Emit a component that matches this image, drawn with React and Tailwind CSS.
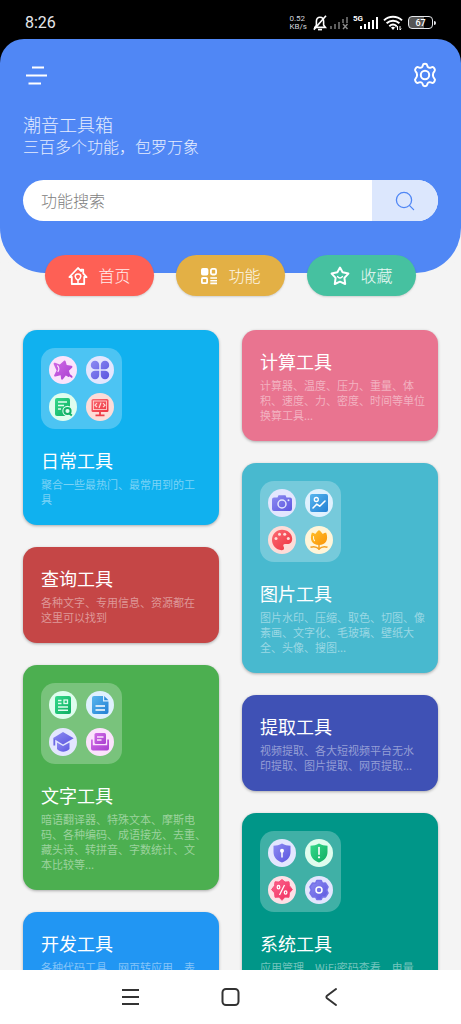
import { useState } from "react";

/* -------------------------------------------------------
    Status bar
--------------------------------------------------------*/
const BellOffIcon = () => (
  <svg width="14" height="16" viewBox="0 0 14 16" fill="none" stroke="#fff" strokeWidth="1.6">
    <path d="M2.600 11.600 3.400 10V6.200C3.400 3.800 4.900 2.200 7 2.200s3.600 1.600 3.600 4V10l1.800 2.400H1" />
    <path d="M13 .8.8 14.600" strokeWidth="1.600" />
    <path d="M5 14.600h4" strokeWidth="1.600" />
  </svg>
);

const NoSignalIcon = () => (
  <svg width="19" height="14" viewBox="0 0 19 14" fill="#5c5c5c">
    <rect x="0" y="10" width="2" height="3" />
    <rect x="4" y="8" width="2" height="5" />
    <rect x="8" y="6" width="2" height="7" />
    <rect x="12" y="3" width="2" height="4" />
    <rect x="16" y="1" width="2" height="6" />
    <path d="m13 8 4.500 5M17.500 8 13 13" stroke="#8a8a8a" strokeWidth="1.400" />
  </svg>
);

const SignalIcon = () => (
  <svg width="18" height="14" viewBox="0 0 18 14" fill="#fff">
    <rect x="0" y="10" width="2" height="3" />
    <rect x="4" y="8" width="2" height="5" />
    <rect x="8" y="6" width="2" height="7" />
    <rect x="12" y="4" width="2" height="9" />
    <rect x="16" y="1" width="2" height="12" />
  </svg>
);

const WifiIcon = () => (
  <svg width="20" height="16" viewBox="0 0 20 16" fill="none" stroke="#fff" strokeWidth="2">
    <path d="M1 5.400c5-4.800 13-4.800 18 0" />
    <path d="M3.600 8.300c3.700-3.300 9.100-3.300 12.800 0" />
    <path d="M6.300 11.200c2.200-2 5.200-2 7.400 0" />
    <path d="m10 15-2-2.400c1-1 3-1 4 0Z" fill="#fff" stroke="none" />
    <path d="M14.500 15v-4M17 11v4m-3.800-2.600 1.300-1.400m3.800 2.600L17 15" strokeWidth="1" />
  </svg>
);

const StatusBar = () => (
  <div className="flex h-[39px] shrink-0 items-center justify-between bg-black px-[25px] pt-[6px] text-white">
    <span className="font-[Roboto] text-[16px] leading-[20px] text-gray-200">8:26</span>
    <div className="flex items-center">
      <span className="font-[Roboto] text-[8px] leading-[8px] text-gray-300">
        0.52
        <br />
        KB/s
      </span>
      <div className="ml-[6px] flex items-center">
        <BellOffIcon />
      </div>
      <div className="ml-[3px]">
        <NoSignalIcon />
      </div>
      <span className="ml-[4px] self-start font-[Roboto] text-[8px] leading-[8px] font-bold">5G</span>
      <div className="-ml-[3px]">
        <SignalIcon />
      </div>
      <div className="ml-[5px]">
        <WifiIcon />
      </div>
      <div className="ml-[5px] flex items-center gap-px">
        <span className="flex h-[13px] w-[25px] items-center justify-center rounded-[4px] border border-gray-200 bg-linear-to-r from-[#555] from-65% to-black to-65% font-[Roboto] text-[9px] leading-[10px] font-medium">
          67
        </span>
        <span className="h-[4px] w-[2px] rounded-r bg-gray-200" />
      </div>
    </div>
  </div>
);

/* -------------------------------------------------------
    Line icons
--------------------------------------------------------*/
const MenuIcon = () => (
  <svg width="26" height="26" viewBox="0 0 26 26" stroke="#fff" strokeWidth="2.200">
    <path d="M9 5.500h12M3 13.500h21M5.500 21.500h12.500" />
  </svg>
);

const GearIcon = () => (
  <svg width="26" height="26" viewBox="0 0 26 26" fill="none" stroke="#fff" strokeWidth="2" strokeLinejoin="round">
    <path d="M10.800 3.400c.3-2.100 4.100-2.100 4.400 0 .3 2 1.700 2.900 3.600 2.200l1.200-.5c1.700-.6 3.900 2.900 2.500 4.200-2.100 1.900-2.100 5.500 0 7.400 1.400 1.300-.8 4.800-2.500 4.200l-1.200-.5c-1.900-.7-3.300.2-3.600 2.200-.3 2.100-4.100 2.100-4.400 0-.3-2-1.700-2.900-3.600-2.200l-1.200.5c-1.700.6-3.900-2.900-2.500-4.200 2.100-1.900 2.100-5.500 0-7.400-1.400-1.300.8-4.800 2.500-4.200l1.200.5c1.900.7 3.300-.2 3.600-2.200z" />
    <circle cx="13" cy="13" r="4.200" />
  </svg>
);

const SearchIcon = () => (
  <svg width="20" height="20" viewBox="0 0 20 20" fill="none" stroke="#5087f5" strokeWidth="1.300" strokeLinecap="round">
    <circle cx="9" cy="9" r="7.600" />
    <path d="m14.600 14.600 4 4" />
  </svg>
);

const HomeIcon = () => (
  <svg width="20" height="20" viewBox="0 0 20 20" fill="none" stroke="#fff" strokeWidth="1.800" strokeLinejoin="round" strokeLinecap="round">
    <path d="M3.800 11H1.400L10 2l3.200 3.200V3.600h2v3.700L18.600 11h-2.400v7H3.800z" />
    <path d="M10 14.300c-1.800-1.400-2.800-2.500-2.800-3.800 0-1.500 1.200-2.500 2.800-2.500s2.800 1 2.800 2.500c0 1.300-1 2.400-2.800 3.800v3" strokeWidth="1.500" />
  </svg>
);

const GridIcon = () => (
  <svg width="18" height="18" viewBox="0 0 18 18" fill="none" stroke="#fff" strokeWidth="1.800">
    <rect x="1.900" y="1.900" width="5.600" height="5.600" rx="1" fill="#fff" />
    <rect x="10.900" y="1.900" width="5.200" height="5.600" rx="1.500" />
    <rect x="1.900" y="11" width="5.200" height="5.200" rx="1" />
    <path d="M10.300 11h6.700M10.300 13.700h6.700M10.300 16.400h6.700" strokeWidth="1.600" />
  </svg>
);

const StarIcon = () => (
  <svg width="20" height="20" viewBox="0 0 20 20" fill="none" stroke="#fff" strokeWidth="2" strokeLinejoin="round" strokeLinecap="round">
    <path d="m10 1.600 2.600 4.700 5.800 1.300-4 4.300.8 6.100-5.200-2.300L4.800 18l.8-6.100-4-4.300 5.800-1.300z" />
    <path d="M7.600 10.600c1.400 1.900 3.400 1.900 4.800 0" strokeWidth="1.500" />
  </svg>
);

/* -------------------------------------------------------
    Round tool icons, gradients are shared by id
--------------------------------------------------------*/
const gradients = [
  ["purple", "#d06ae6", "#a93fd0"],
  ["indigo", "#8d8bf2", "#5c56df"],
  ["green", "#35d98b", "#0fae62"],
  ["red", "#fb6a72", "#ee3340"],
  ["blue", "#58b6ee", "#2380d4"],
  ["orange", "#ffc02c", "#fb9407"],
  ["rose", "#fb6890", "#f12a5c"],
];

const Gradients = () => (
  <svg width="0" height="0" className="absolute" aria-hidden="true">
    <defs>
      {gradients.map(([id, from, to]) => (
        <linearGradient key={id} id={id} x1="0" y1="0" x2="1" y2="1">
          <stop offset="0" stopColor={from} />
          <stop offset="1" stopColor={to} />
        </linearGradient>
      ))}
    </defs>
  </svg>
);

const Round = ({ bg, children }) => (
  <svg width="28" height="28" viewBox="0 0 28 28" aria-hidden="true">
    <circle cx="14" cy="14" r="14" fill={bg} />
    {children}
  </svg>
);

const MagicStar = () => (
  <Round bg="#fbe3fc">
    <path
      d="M15 4.800c.7-.5 1.500-.1 1.700.7l1 3.600 4.700.6c1.100.1 1.400 1.300.6 2l-3.100 3 1.100 3.500c1 .6 2.100 1.400 2.500 2.400.4 1.200-.8 1.500-1.500.8l-1.400-1.200c0 .7-.8 1-1.500.6l-2.300-1.200-2.900 3.600c-.6.8-1.700.5-1.800-.4l-.5-3.600-5.200 1.300c-1 .2-1.600-.6-1.100-1.500l2.300-4.500-2.900-6.300c-.4-1 .4-1.800 1.400-1.400l4.700 1.800z"
      fill="url(#purple)"
    />
    <path d="M8.300 9.500c2 1.800 2 4.700.4 6.400" fill="none" stroke="#fbe3fc" strokeWidth="1.200" />
  </Round>
);

const Clover = () => (
  <Round bg="#e3e6fe">
    <path
      d="M13.200 13.200H9.300a4.200 4.200 0 1 1 3.900-4zM14.800 13.200v-4a4.200 4.200 0 1 1 3.900 4zM13.200 14.800v4a4.200 4.200 0 1 1-3.900-4zM14.800 14.800h3.900a4.200 4.200 0 1 1-3.900 4z"
      fill="url(#indigo)"
    />
  </Round>
);

const DocSearch = () => (
  <Round bg="#dffdee">
    <rect x="6" y="5" width="15" height="18" rx="2" fill="url(#green)" />
    <path d="M9 9h9M9 12.500h6M9 16h3" stroke="#dffdee" strokeWidth="1.500" />
    <circle cx="18.500" cy="18" r="5.200" fill="#dffdee" />
    <circle cx="18.500" cy="18" r="3.100" fill="none" stroke="#13b268" strokeWidth="2" />
    <path d="m20.500 20.500 2.300 2" stroke="#13b268" strokeWidth="2" />
  </Round>
);

const CodeScreen = () => (
  <Round bg="#fddcd8">
    <rect x="5.500" y="6" width="17" height="13" rx="1.500" fill="url(#red)" />
    <rect x="7.500" y="8" width="13" height="8.600" fill="none" stroke="#fddcd8" strokeWidth=".8" />
    <path d="m11 10.200-2 2 2 2M17 10.200l2 2-2 2M15 9.600l-2 5.400" fill="none" stroke="#fddcd8" strokeWidth="1.200" />
    <path d="M14 19v3M9.500 22.300h9" stroke="#ee3f49" strokeWidth="1.800" />
  </Round>
);

const Camera = () => (
  <Round bg="#e3e6fe">
    <path d="M6 8.500h3.500l1-2.300h7l1 2.300H22a2 2 0 0 1 2 2V20a2 2 0 0 1-2 2H6a2 2 0 0 1-2-2v-9.500a2 2 0 0 1 2-2z" fill="url(#indigo)" />
    <circle cx="14" cy="15" r="4" fill="none" stroke="#e3e6fe" strokeWidth="1.500" />
    <circle cx="20.500" cy="11.300" r="1" fill="#e3e6fe" />
  </Round>
);

const Picture = () => (
  <Round bg="#dff1fe">
    <rect x="5" y="5" width="18" height="18" rx="2" fill="url(#blue)" />
    <circle cx="11.300" cy="10.500" r="2" fill="none" stroke="#fff" strokeWidth="1.300" />
    <path d="m8 19 3.700-3.800 3 2L20 12" fill="none" stroke="#fff" strokeWidth="1.600" strokeLinecap="round" strokeLinejoin="round" />
  </Round>
);

const Palette = () => (
  <Round bg="#fddcd8">
    <path d="M14 3.800c5.800 0 10.200 4 10.200 9 0 3.600-2 5.200-4.800 5.200-1.800 0-3.400-.4-4 .8-.7 1.300 1 2.300.6 4-.3 1.200-1.300 1.500-2.500 1.400C8.200 23.800 4 19.400 4 14S8.200 3.800 14 3.800z" fill="url(#red)" />
    <g fill="#fddcd8">
      <circle cx="8" cy="12.500" r="1.500" />
      <circle cx="11.500" cy="8.300" r="1.500" />
      <circle cx="16.700" cy="8.300" r="1.500" />
      <circle cx="20.300" cy="12.500" r="1.500" />
    </g>
  </Round>
);

const Tulip = () => (
  <Round bg="#fff5d9">
    <path
      d="M6.800 6.800c1.400 0 2.500.5 3.400 1.300L13 4.700c.6-.7 1.400-.7 2 0l2.800 3.400c.9-.8 2-1.300 3.400-1.300 2.600 7-.4 12.200-7.200 12.200S4.200 13.800 6.800 6.800z"
      fill="url(#orange)"
    />
    <path d="M14 18v6M5.500 21.300c3.300-1.200 6.200-.6 8.500 1.700 2.300-2.300 5.200-2.900 8.500-1.700" fill="none" stroke="#f5a020" strokeWidth="1.500" />
    <path d="M8.500 10.500c-.2 1.700.1 3 1 4.200" fill="none" stroke="#fff5d9" strokeWidth="1.100" strokeLinecap="round" />
  </Round>
);

const Newspaper = () => (
  <Round bg="#dffdee">
    <rect x="6" y="5" width="16" height="18" rx="2" fill="url(#green)" />
    <path d="M9 9.500h3.500M9 12.500h3.500M9 16h10M9 19.300h10" stroke="#dffdee" strokeWidth="1.400" />
    <rect x="15" y="9" width="3.500" height="3.500" fill="none" stroke="#dffdee" strokeWidth="1.300" />
  </Round>
);

const FileText = () => (
  <Round bg="#dff1fe">
    <path d="M8 5h9v5.500h5.500V21a2 2 0 0 1-2 2H8a2 2 0 0 1-2-2V7a2 2 0 0 1 2-2z" fill="url(#blue)" />
    <path d="m18.200 5 4.300 4.300h-4.300z" fill="#2f8ddb" />
    <path d="M9.500 15h9.500M9.500 19h9.500" stroke="#fff" strokeWidth="1.300" />
  </Round>
);

const GradCap = () => (
  <Round bg="#e3e6fe">
    <path d="m14 4 10.700 6.300L14 16.400 3.800 10.300z" fill="url(#indigo)" />
    <path d="M8 14.600 14 18l6.500-3.600v6.700c-3.800 3.500-9 3.500-12.500 0z" fill="url(#indigo)" />
    <path d="M5.300 11v6.500" stroke="#6c68e4" strokeWidth="1.800" />
  </Round>
);

const Inbox = () => (
  <Round bg="#fbe3fc">
    <rect x="8.500" y="5" width="11.500" height="11" rx="1.500" fill="url(#purple)" />
    <path d="M11 9h6.500M11 12h4.500" stroke="#fbe3fc" strokeWidth="1.300" />
    <path d="M5 11.500h1.800v5.800h14.400v-5.800H23v9a2 2 0 0 1-2 2H7a2 2 0 0 1-2-2z" fill="url(#purple)" />
  </Round>
);

const shieldPath = "M14 4.500c2.700 1.500 5.500 2.200 8.500 2.200V13c0 5-3.200 8.500-8.500 10.600C8.700 21.500 5.500 18 5.500 13V6.700c3 0 5.800-.7 8.500-2.200z";

const ShieldLock = () => (
  <Round bg="#e3e6fe">
    <path d={shieldPath} fill="url(#indigo)" />
    <circle cx="14" cy="11.700" r="2" fill="#fff" />
    <path d="M14 12v6.500" stroke="#fff" strokeWidth="1.500" />
  </Round>
);

const ShieldAlert = () => (
  <Round bg="#dffdee">
    <path d={shieldPath} fill="url(#green)" />
    <path d="M14 8.500v6.800" stroke="#fff" strokeWidth="1.600" strokeLinecap="round" />
    <circle cx="14" cy="18.300" r="1.100" fill="#fff" />
  </Round>
);

const Discount = () => (
  <Round bg="#fde0e6">
    <path
      d="m14 3.500 3 2.600 4-.3.400 3.900 3 3.900-3 3.300-.4 4.400-4-.2-3 3.200-3-3.200-4 .2-.4-4.400-3-3.300 3-3.900.4-3.900 4 .3z"
      fill="url(#rose)"
      stroke="#f64a75"
      strokeLinejoin="round"
    />
    <g fill="none" stroke="#fff" strokeWidth="1.300">
      <path d="m16.500 9-5 10" />
      <ellipse cx="10.500" cy="11.200" rx="1.300" ry="1.700" />
      <ellipse cx="17.600" cy="16.500" rx="1.300" ry="1.700" />
    </g>
  </Round>
);

const Cog = () => (
  <Round bg="#e3e6fe">
    <path
      d="M11.800 4.500h4.400l1.200 2.700 3.100-.1 2.500 3.900-1.300 3 1.300 3-2.500 3.900-3.100-.1-1.200 2.700h-4.400l-1.200-2.700-3.100.1L5 17l1.300-3L5 11l2.500-3.900 3.100.1z"
      fill="url(#indigo)"
      stroke="#7672e8"
      strokeWidth="1.600"
      strokeLinejoin="round"
    />
    <circle cx="14" cy="14" r="3" fill="none" stroke="#fff" strokeWidth="1.500" />
  </Round>
);

/* -------------------------------------------------------
    Data
--------------------------------------------------------*/
const tabs = [
  { name: "首页", color: "bg-[#fe6055]", icon: HomeIcon },
  { name: "功能", color: "bg-[#e3b045]", icon: GridIcon },
  { name: "收藏", color: "bg-[#46c1a0]", icon: StarIcon },
];

const leftCards = [
  {
    title: "日常工具",
    color: "bg-[#10b1ef]",
    icons: [MagicStar, Clover, DocSearch, CodeScreen],
    lines: ["聚合一些最热门、最常用到的工", "具"],
  },
  {
    title: "查询工具",
    color: "bg-[#c54646]",
    lines: ["各种文字、专用信息、资源都在", "这里可以找到"],
  },
  {
    title: "文字工具",
    color: "bg-[#4caf50]",
    icons: [Newspaper, FileText, GradCap, Inbox],
    lines: [
      "暗语翻译器、特殊文本、摩斯电",
      "码、各种编码、成语接龙、去重、",
      "藏头诗、转拼音、字数统计、文",
      "本比较等...",
    ],
  },
  {
    title: "开发工具",
    color: "bg-[#2196f3]",
    lines: ["各种代码工具、网页转应用、表"],
  },
];

const rightCards = [
  {
    title: "计算工具",
    color: "bg-[#e97490]",
    lines: ["计算器、温度、压力、重量、体", "积、速度、力、密度、时间等单位", "换算工具..."],
  },
  {
    title: "图片工具",
    color: "bg-[#48b9cf]",
    icons: [Camera, Picture, Palette, Tulip],
    lines: ["图片水印、压缩、取色、切图、像", "素画、文字化、毛玻璃、壁纸大", "全、头像、搜图..."],
  },
  {
    title: "提取工具",
    color: "bg-[#3f51b5]",
    lines: ["视频提取、各大短视频平台无水", "印提取、图片提取、网页提取..."],
  },
  {
    title: "系统工具",
    color: "bg-[#009688]",
    icons: [ShieldLock, ShieldAlert, Discount, Cog],
    lines: ["应用管理、WiFi密码查看、电量"],
  },
];

const ToolCard = ({ card }) => (
  <a href="#" className={`block rounded-[14px] p-[18px] shadow-[0_1px_3px_rgba(0,0,0,0.3)] ${card.color}`}>
    {card.icons && (
      <div className="mb-[18px] grid size-[81px] grid-cols-2 gap-[9px] rounded-[14px] bg-white/25 p-[8px]">
        {card.icons.map((Icon, idx) => (
          <Icon key={idx} />
        ))}
      </div>
    )}
    <h2 className="text-[18px] leading-[26px] text-white">{card.title}</h2>
    <p className="mt-[4px] text-[11px] leading-[15px] whitespace-nowrap text-white/45">
      {card.lines.map((line) => (
        <span key={line} className="block">
          {line}
        </span>
      ))}
    </p>
  </a>
);

export default function App() {
  const [searchText, setSearchText] = useState("");

  return (
    <div className="flex h-screen flex-col overflow-hidden bg-[#f4f4f4] font-['Noto_Sans_CJK_SC',sans-serif]">
      <Gradients />
      <StatusBar />

      <header className="shrink-0 bg-linear-to-b from-black from-50% to-[#f4f4f4] to-50%">
        <div className="rounded-t-[24px] rounded-b-[45px] bg-[#5087f5] px-[23px] pt-[23px] pb-[52px]">
          <div className="flex items-center justify-between">
            <button aria-label="菜单">
              <MenuIcon />
            </button>
            <button aria-label="设置">
              <GearIcon />
            </button>
          </div>
          <h1 className="mt-[25px] text-[18px] leading-[22px] font-light text-white/85">潮音工具箱</h1>
          <p className="text-[16px] leading-[23px] font-light text-white/85">三百多个功能，包罗万象</p>
          <div className="mt-[22px] flex h-[41px] overflow-hidden rounded-full bg-white">
            <input
              className="min-w-0 flex-1 pb-[2px] pl-[18px] text-[16px] font-light text-gray-700 outline-none placeholder:text-[#808080]"
              placeholder="功能搜索"
              aria-label="功能搜索"
              value={searchText}
              onChange={(e) => setSearchText(e.target.value)}
            />
            <button className="flex w-[66px] items-center justify-center bg-[#dce7fd]" aria-label="搜索">
              <SearchIcon />
            </button>
          </div>
        </div>
      </header>

      <nav className="-mt-[18px] flex shrink-0 justify-center gap-[22px]">
        {tabs.map(({ name, color, icon: Icon }) => (
          <button
            key={name}
            className={`flex h-[41px] w-[109px] items-center justify-center gap-[10px] rounded-full text-[16px] font-light text-white/90 shadow-[0_1px_2px_rgba(0,0,0,0.15)] ${color}`}
          >
            <Icon />
            <span className="pb-[2px]">{name}</span>
          </button>
        ))}
      </nav>

      <main className="mt-[20px] min-h-0 flex-1 overflow-y-auto [scrollbar-width:none]">
        <div className="grid grid-cols-2 items-start gap-[23px] px-[23px] pt-[14px]">
          <div className="flex flex-col gap-[22px]">
            {leftCards.map((card) => (
              <ToolCard key={card.title} card={card} />
            ))}
          </div>
          <div className="flex flex-col gap-[22px]">
            {rightCards.map((card) => (
              <ToolCard key={card.title} card={card} />
            ))}
          </div>
        </div>
      </main>

      <footer className="flex h-[54px] shrink-0 items-center justify-center gap-[80px] bg-white">
        <button aria-label="最近任务">
          <svg width="20" height="20" viewBox="0 0 20 20" stroke="#333" strokeWidth="2">
            <path d="M1 3h17M1 10h17M1 17h17" />
          </svg>
        </button>
        <button aria-label="主页">
          <svg width="20" height="20" viewBox="0 0 20 20" fill="none" stroke="#333" strokeWidth="2">
            <rect x="1.500" y="2" width="16" height="16" rx="3.500" />
          </svg>
        </button>
        <button aria-label="返回">
          <svg width="20" height="20" viewBox="0 0 20 20" fill="none" stroke="#333" strokeWidth="2" strokeLinecap="round" strokeLinejoin="round">
            <path d="m15 2-9 6.800c-.8.700-.8 1.700 0 2.400L15 18" />
          </svg>
        </button>
      </footer>
    </div>
  );
}
